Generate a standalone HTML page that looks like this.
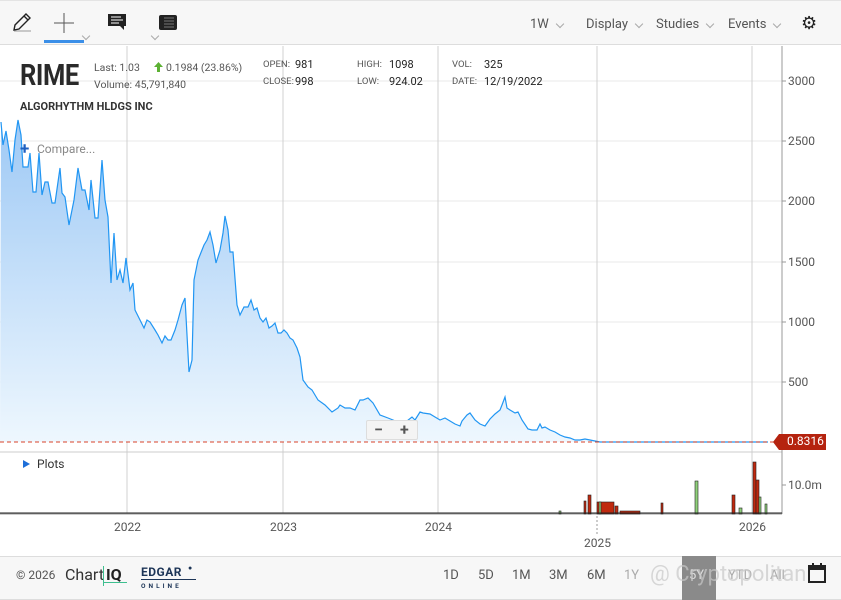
<!DOCTYPE html>
<html><head><meta charset="utf-8"><style>
*{margin:0;padding:0;box-sizing:border-box}
body{width:841px;height:600px;overflow:hidden;background:#fff;font-family:"Roboto","Liberation Sans",sans-serif;color:#333;position:relative}
.abs{position:absolute}
.tb{top:0;left:0;width:841px;height:45px;background:#f7f7f7;border-bottom:1px solid #ddd;border-top:1px solid #e4e4e4}
.tbt{font-size:13px;color:#555;top:17px}
.chev{display:inline-block;width:6px;height:6px;border-right:1px solid #aaa;border-bottom:1px solid #aaa;transform:rotate(45deg);margin-left:8px;position:relative;top:-1px}
.ft{top:556px;left:0;width:841px;height:44px;background:#f7f7f7;border-top:1px solid #ddd;border-bottom:1px solid #ddd}
.fb{font-size:13px;color:#555;top:568px}
.ax{font-size:12px;color:#555}
.lbl{font-size:9.5px;color:#555}
.val{font-size:11px;color:#222}
</style></head><body>
<div class="abs tb"></div>
<svg class="abs" style="left:11px;top:11px" width="22" height="22" viewBox="0 0 22 22"><path d="M3 19 L4 14 L15 3 L19 7 L8 18 Z M13 5 L17 9" fill="none" stroke="#222" stroke-width="1.4"/><line x1="3" y1="20" x2="20" y2="20" stroke="#999"/></svg>
<svg class="abs" style="left:54px;top:13px" width="20" height="20"><line x1="10" y1="0" x2="10" y2="20" stroke="#555"/><line x1="0" y1="10" x2="20" y2="10" stroke="#555"/></svg>
<span class="abs chev" style="left:75px;top:24px"></span>
<div class="abs" style="left:44px;top:40px;width:40px;height:3px;background:#3b8fe8"></div>
<svg class="abs" style="left:108px;top:14px" width="18" height="16"><path d="M0 0H18V12H16V16L12 12H0Z" fill="#222"/><g stroke="#fff"><line x1="3" y1="3" x2="13" y2="3"/><line x1="3" y1="6" x2="15" y2="6"/><line x1="3" y1="9" x2="11" y2="9"/></g></svg>
<span class="abs chev" style="left:126px;top:24px"></span>
<svg class="abs" style="left:159px;top:15px" width="18" height="15"><rect width="18" height="15" rx="2" fill="#222"/><g stroke="#777"><line x1="5" y1="3" x2="15" y2="3"/><line x1="5" y1="6" x2="15" y2="6"/><line x1="5" y1="9" x2="15" y2="9"/><line x1="5" y1="12" x2="15" y2="12"/></g></svg>
<span class="abs tbt" style="left:530px">1W<span class="chev"></span></span>
<span class="abs tbt" style="left:586px">Display<span class="chev"></span></span>
<span class="abs tbt" style="left:656px">Studies<span class="chev"></span></span>
<span class="abs tbt" style="left:728px">Events<span class="chev"></span></span>
<span class="abs" style="left:801px;top:13px;font-size:18px;color:#222">⚙</span>
<span class="abs chev" style="left:822px;top:24px"></span>

<svg class="abs" style="left:0;top:46px" width="841" height="510">
<defs><linearGradient id="g" x1="0" y1="0" x2="0" y2="1"><stop offset="0" stop-color="#9ec9f5"/><stop offset="1" stop-color="#eef7fe"/></linearGradient></defs>
<g stroke="#e8e8e8"><line x1="0" y1="35" x2="782" y2="35"/><line x1="0" y1="95" x2="782" y2="95"/><line x1="0" y1="155" x2="782" y2="155"/><line x1="0" y1="216" x2="782" y2="216"/><line x1="0" y1="276" x2="782" y2="276"/><line x1="0" y1="336" x2="782" y2="336"/></g>
<g stroke="#d0d0d0"><line x1="127" y1="0" x2="127" y2="468"/><line x1="283" y1="0" x2="283" y2="468"/><line x1="438" y1="0" x2="438" y2="468"/><line x1="597" y1="0" x2="597" y2="468"/><line x1="752" y1="0" x2="752" y2="468"/></g>
<polygon fill="url(#g)" points="0,396 1,76 3,99 6,85 9,104 12,126 15,94 18,74 21,89 23,121 28,121 30,107 33,146 36,146 39,107 42,149 45,136 48,136 52,157 55,157 60,122 62,147 65,151 69,179 74,154 78,122 82,144 85,144 89,164 91,134 95,172 98,172 102,114 105,154 108,171 111,237 114,187 117,234 120,224 123,237 126,212 130,244 133,237 135,264 140,274 144,282 147,274 150,276 155,284 158,289 162,297 165,290 168,294 171,294 175,284 178,274 182,259 185,252 189,326 192,314 194,234 198,214 202,204 204,199 207,194 210,186 213,199 216,217 220,204 223,187 225,170 228,184 230,206 233,206 237,259 240,269 244,261 248,261 251,254 254,264 257,262 260,272 263,276 266,272 269,282 272,280 275,277 278,287 281,287 284,284 287,287 290,292 293,294 297,302 300,311 303,334 308,341 312,344 318,354 325,359 332,366 338,362 340,359 345,362 350,362 355,364 360,354 363,354 368,352 373,357 380,369 388,372 393,374 400,377 407,375 412,371 415,374 420,366 423,367 430,368 435,371 440,374 445,372 450,375 455,378 460,380 462,375 467,369 470,367 475,374 480,378 485,380 490,373 495,368 500,364 502,359 505,351 507,362 510,364 515,367 518,366 522,374 528,383 532,384 537,384 540,378 542,382 545,381 550,384 555,386 560,389 565,391 570,392 575,394 580,394 585,393 590,394 600,396 768,396 768,396"/>
<polyline fill="none" stroke="#2196f3" stroke-width="1.2" points="1,76 3,99 6,85 9,104 12,126 15,94 18,74 21,89 23,121 28,121 30,107 33,146 36,146 39,107 42,149 45,136 48,136 52,157 55,157 60,122 62,147 65,151 69,179 74,154 78,122 82,144 85,144 89,164 91,134 95,172 98,172 102,114 105,154 108,171 111,237 114,187 117,234 120,224 123,237 126,212 130,244 133,237 135,264 140,274 144,282 147,274 150,276 155,284 158,289 162,297 165,290 168,294 171,294 175,284 178,274 182,259 185,252 189,326 192,314 194,234 198,214 202,204 204,199 207,194 210,186 213,199 216,217 220,204 223,187 225,170 228,184 230,206 233,206 237,259 240,269 244,261 248,261 251,254 254,264 257,262 260,272 263,276 266,272 269,282 272,280 275,277 278,287 281,287 284,284 287,287 290,292 293,294 297,302 300,311 303,334 308,341 312,344 318,354 325,359 332,366 338,362 340,359 345,362 350,362 355,364 360,354 363,354 368,352 373,357 380,369 388,372 393,374 400,377 407,375 412,371 415,374 420,366 423,367 430,368 435,371 440,374 445,372 450,375 455,378 460,380 462,375 467,369 470,367 475,374 480,378 485,380 490,373 495,368 500,364 502,359 505,351 507,362 510,364 515,367 518,366 522,374 528,383 532,384 537,384 540,378 542,382 545,381 550,384 555,386 560,389 565,391 570,392 575,394 580,394 585,393 590,394 600,396 768,396"/>
<line x1="0" y1="396" x2="775" y2="396" stroke="#d9432b" stroke-dasharray="4,3"/>
<line x1="0" y1="406" x2="782" y2="406" stroke="#ccc"/>
<line x1="0" y1="468" x2="782" y2="468" stroke="#999"/>
<line x1="782" y1="0" x2="782" y2="468" stroke="#999"/>
<g stroke="#999"><line x1="782" y1="35" x2="786" y2="35"/><line x1="782" y1="95" x2="786" y2="95"/><line x1="782" y1="155" x2="786" y2="155"/><line x1="782" y1="216" x2="786" y2="216"/><line x1="782" y1="276" x2="786" y2="276"/><line x1="782" y1="336" x2="786" y2="336"/><line x1="782" y1="439" x2="786" y2="439"/></g>
<path d="M773 396 L779 388 H826 V404 H779 Z" fill="#b5230f"/>
<g stroke="#222" stroke-width="0.6">
<rect x="584" y="455" width="2" height="13" fill="#c0290e"/>
<rect x="588" y="449" width="3" height="19" fill="#c0290e"/>
<rect x="597" y="456" width="17" height="12" fill="#c0290e"/>
<rect x="599" y="456" width="2" height="12" fill="#8fd07a"/>
<rect x="615" y="460" width="3" height="8" fill="#c0290e"/>
<rect x="620" y="465" width="20" height="3" fill="#c0290e"/>
<rect x="661" y="457" width="2" height="11" fill="#c0290e"/>
<rect x="695" y="435" width="3" height="33" fill="#8fd07a"/>
<rect x="559" y="465" width="2" height="3" fill="#8fd07a"/>
<rect x="732" y="449" width="3" height="19" fill="#c0290e"/>
<rect x="739" y="462" width="3" height="6" fill="#8fd07a"/>
<rect x="753" y="416" width="3" height="52" fill="#c0290e"/>
<rect x="756" y="434" width="3" height="34" fill="#c0290e"/>
<rect x="759" y="451" width="2" height="17" fill="#8fd07a"/>
<rect x="765" y="458" width="2" height="10" fill="#8fd07a"/>
</g>
<line x1="0" y1="467" x2="782" y2="467" stroke="#222"/>
<line x1="597" y1="470" x2="597" y2="488" stroke="#999" stroke-dasharray="2,2"/>
</svg>
<span class="abs ax" style="left:788px;top:74px">3000</span>
<span class="abs ax" style="left:788px;top:134px">2500</span>
<span class="abs ax" style="left:788px;top:194px">2000</span>
<span class="abs ax" style="left:788px;top:255px">1500</span>
<span class="abs ax" style="left:788px;top:315px">1000</span>
<span class="abs ax" style="left:788px;top:375px">500</span>
<span class="abs ax" style="left:788px;top:478px">10.0m</span>
<span class="abs" style="left:787px;top:434px;font-size:12px;color:#fff">0.8316</span>
<span class="abs ax" style="left:114px;top:520px">2022</span>
<span class="abs ax" style="left:270px;top:520px">2023</span>
<span class="abs ax" style="left:425px;top:520px">2024</span>
<span class="abs ax" style="left:584px;top:536px">2025</span>
<span class="abs ax" style="left:739px;top:520px">2026</span>

<div class="abs" style="left:366px;top:420px;width:52px;height:20px;background:#f4f4f4;border:1px solid #ddd;border-radius:2px;font-size:16px;color:#555;font-weight:bold"><span class="abs" style="left:7px;top:-1px">−</span><span class="abs" style="left:33px;top:-1px">+</span></div>
<svg class="abs" style="left:22px;top:459px" width="10" height="10"><path d="M1 1 L8 5 L1 9Z" fill="#1e6fd9"/></svg>
<span class="abs" style="left:37px;top:457px;font-size:12px;color:#333">Plots</span>

<span class="abs" style="left:20px;top:58px;font-size:30px;font-weight:bold;color:#2a2a2a;transform:scaleX(0.85);transform-origin:0 0;letter-spacing:-0.5px">RIME</span>
<span class="abs" style="left:94px;top:61px;font-size:10.5px;color:#555">Last: 1.03</span>
<svg class="abs" style="left:154px;top:62px" width="9" height="10"><path d="M4.5 0 L9 5 H6 V10 H3 V5 H0Z" fill="#5cb133"/></svg>
<span class="abs" style="left:166px;top:61px;font-size:10.5px;color:#555">0.1984 (23.86%)</span>
<span class="abs" style="left:94px;top:78px;font-size:10.5px;color:#555">Volume: 45,791,840</span>
<span class="abs" style="left:20px;top:100px;font-size:11px;font-weight:bold;color:#333">ALGORHYTHM HLDGS INC</span>
<span class="abs lbl" style="left:263px;top:59px">OPEN:</span><span class="abs val" style="left:295px;top:58px">981</span>
<span class="abs lbl" style="left:263px;top:76px">CLOSE:</span><span class="abs val" style="left:295px;top:75px">998</span>
<span class="abs lbl" style="left:357px;top:59px">HIGH:</span><span class="abs val" style="left:389px;top:58px">1098</span>
<span class="abs lbl" style="left:357px;top:76px">LOW:</span><span class="abs val" style="left:389px;top:75px">924.02</span>
<span class="abs lbl" style="left:452px;top:59px">VOL:</span><span class="abs val" style="left:484px;top:58px">325</span>
<span class="abs lbl" style="left:452px;top:76px">DATE:</span><span class="abs val" style="left:484px;top:75px">12/19/2022</span>
<span class="abs" style="left:20px;top:139px;font-size:17px;color:#1e5fc0;font-weight:bold">+</span>
<span class="abs" style="left:37px;top:142px;font-size:12px;color:#888">Compare...</span>

<div class="abs ft"></div>
<div class="abs" style="left:682px;top:556px;width:34px;height:44px;background:#8a8a8a"></div>
<span class="abs" style="left:16px;top:568px;font-size:12px;color:#555">© 2026</span>
<span class="abs" style="left:65px;top:565px;font-size:16px;color:#333">Chart</span>
<span class="abs" style="left:106px;top:565px;font-size:16px;color:#222;font-weight:bold">IQ</span>
<div class="abs" style="left:103px;top:566px;width:1px;height:20px;background:#3dbf8f"></div>
<div class="abs" style="left:103px;top:582px;width:24px;height:1px;background:#3dbf8f"></div>
<span class="abs" style="left:141px;top:565px;font-size:12px;color:#1d3557;font-weight:bold;letter-spacing:0.5px">EDGAR</span>
<span class="abs" style="left:188px;top:564px;font-size:7px;color:#1d3557">●</span>
<div class="abs" style="left:141px;top:579px;width:55px;height:1px;background:#1d3557"></div>
<span class="abs" style="left:141px;top:582px;font-size:6.5px;color:#1d3557;font-weight:bold;letter-spacing:3px">ONLINE</span>
<span class="abs fb" style="left:443px">1D</span>
<span class="abs fb" style="left:478px">5D</span>
<span class="abs fb" style="left:512px">1M</span>
<span class="abs fb" style="left:549px">3M</span>
<span class="abs fb" style="left:587px">6M</span>
<span class="abs fb" style="left:624px;color:#aaa">1Y</span>
<span class="abs fb" style="left:689px;color:#ddd">5Y</span>
<span class="abs fb" style="left:728px;color:#aaa">YTD</span>
<span class="abs fb" style="left:770px;color:#aaa">All</span>
<span class="abs" style="left:650px;top:562px;font-size:22px;color:rgba(200,200,200,0.7)">@ Cryptopolitan</span>
<svg class="abs" style="left:808px;top:563px" width="18" height="20"><rect x="1" y="3" width="16" height="16" fill="none" stroke="#222" stroke-width="2"/><rect x="1" y="3" width="16" height="4" fill="#222"/><line x1="5" y1="0" x2="5" y2="4" stroke="#222" stroke-width="2"/><line x1="13" y1="0" x2="13" y2="4" stroke="#222" stroke-width="2"/></svg>
</body></html>
